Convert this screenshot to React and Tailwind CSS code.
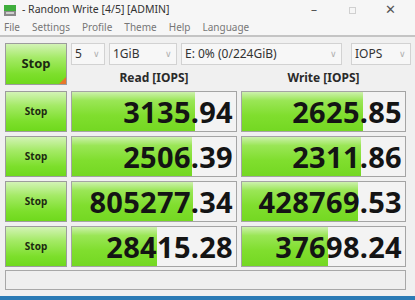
import React from 'react'

const rows = [
  { read: '3135.94', readPct: 75, write: '2625.85', writePct: 74 },
  { read: '2506.39', readPct: 73, write: '2311.86', writePct: 73 },
  { read: '805277.34', readPct: 74, write: '428769.53', writePct: 71 },
  { read: '28415.28', readPct: 52, write: '37698.24', writePct: 53 },
]

const menu = ['File', 'Settings', 'Profile', 'Theme', 'Help', 'Language']

function Select({ label, width }) {
  return (
    <div className={`h-[22px] ${width} flex items-center justify-between bg-[#f7f7f7] border border-[#d2d2d2] pl-[3px] pr-[4px] text-[12px] text-[#333]`}>
      <span>{label}</span>
      <span className="text-[#b0b0b0] text-[9px]">&#8744;</span>
    </div>
  )
}

function StopButton({ big }) {
  return (
    <div className={`relative w-[62px] ${big ? 'h-[42px]' : 'h-[41px]'} border border-[#9c9c9c] bg-[linear-gradient(to_bottom,#d3f3b6_0%,#a4ea66_35%,#7ddf2c_75%,#6fd91c_100%)] flex items-center justify-center`}>
      <span className={`font-bold text-[#1c2a10] ${big ? 'text-[13px]' : 'text-[10px]'}`}>Stop</span>
      {big && (
        <span className="absolute right-0 bottom-0 w-0 h-0 border-l-[7px] border-l-transparent border-b-[7px] border-b-[#e8762a]" />
      )}
    </div>
  )
}

function Cell({ value, pct, width }) {
  return (
    <div className={`relative ${width} h-[41px] border border-[#a4a4a4] bg-[#f3f3f3] overflow-hidden`}>
      <div
        className="absolute left-0 top-0 bottom-0 bg-[linear-gradient(to_bottom,#cdf1ad_0%,#9ae656_22%,#80de2e_60%,#74d822_100%)]"
        style={{ width: `${pct}%` }}
      />
      <div className="relative h-full flex items-center justify-end pr-[3px] text-[29px] leading-none font-bold text-[#141414] tracking-[0.3px]">
        {value}
      </div>
    </div>
  )
}

export default function App() {
  return (
    <div className="w-[415px] h-[300px] bg-[#f0f0f0] overflow-hidden flex flex-col" style={{ fontFamily: '"Noto Sans", "Open Sans", sans-serif' }}>
      {/* Title bar */}
      <div className="h-[20px] bg-[#f6f6f6] flex items-center">
        <svg className="ml-[4px]" width="12" height="11" viewBox="0 0 12 11">
          <rect x="0" y="0" width="12" height="6" fill="#3fae3c" />
          <rect x="0" y="6" width="12" height="5" fill="#8a8a8a" />
          <rect x="2" y="7" width="8" height="2" fill="#cfcfcf" />
        </svg>
        <span className="ml-[6px] text-[10.5px] text-[#333]">- Random Write [4/5] [ADMIN]</span>
        <div className="ml-auto flex items-center text-[#555]">
          <span className="w-[38px] text-center text-[12px]">&#8211;</span>
          <span className="w-[38px] flex justify-center">
            <span className="w-[7px] h-[7px] border border-[#d0d0d0]" />
          </span>
          <span className="w-[38px] text-center text-[13px] mr-[6px]">&#10005;</span>
        </div>
      </div>

      {/* Menu */}
      <div className="h-[17px] bg-[#f6f6f6] flex items-center pl-[4px] gap-[12px] text-[10px] text-[#767676] border-b-2 border-[#c4c4c4]">
        {menu.map(m => (
          <span key={m}>{m}</span>
        ))}
      </div>

      {/* Client area */}
      <div className="pl-[5px] pt-[6px] flex flex-col">
        <div className="flex gap-[4px]">
          <StopButton big />
          <div className="flex flex-col">
            <div className="flex gap-[4px]">
              <Select label="5" width="w-[34px]" />
              <Select label="1GiB" width="w-[68px]" />
              <Select label="E: 0% (0/224GiB)" width="w-[161px]" />
              <div className="w-[1px]" />
              <Select label="IOPS" width="w-[60px]" />
            </div>
            <div className="flex gap-[4px] mt-[4px]">
              <div className="w-[166px] text-center text-[12px] font-bold text-[#2a2a2a]">Read [IOPS]</div>
              <div className="w-[165px] text-center text-[12px] font-bold text-[#2a2a2a]">Write [IOPS]</div>
            </div>
          </div>
        </div>

        <div className="flex flex-col gap-[4px] mt-[4px]">
          {rows.map((r, i) => (
            <div key={i} className="flex gap-[4px]">
              <StopButton />
              <Cell value={r.read} pct={r.readPct} width="w-[166px]" />
              <Cell value={r.write} pct={r.writePct} width="w-[165px]" />
            </div>
          ))}
        </div>

        <div className="mt-[3px] w-[401px] h-[20px] border border-[#a8a8a8] bg-[#efefef]" />
      </div>

      <div className="mt-auto h-[4px] bg-[#2b7bb5]" />
    </div>
  )
}
